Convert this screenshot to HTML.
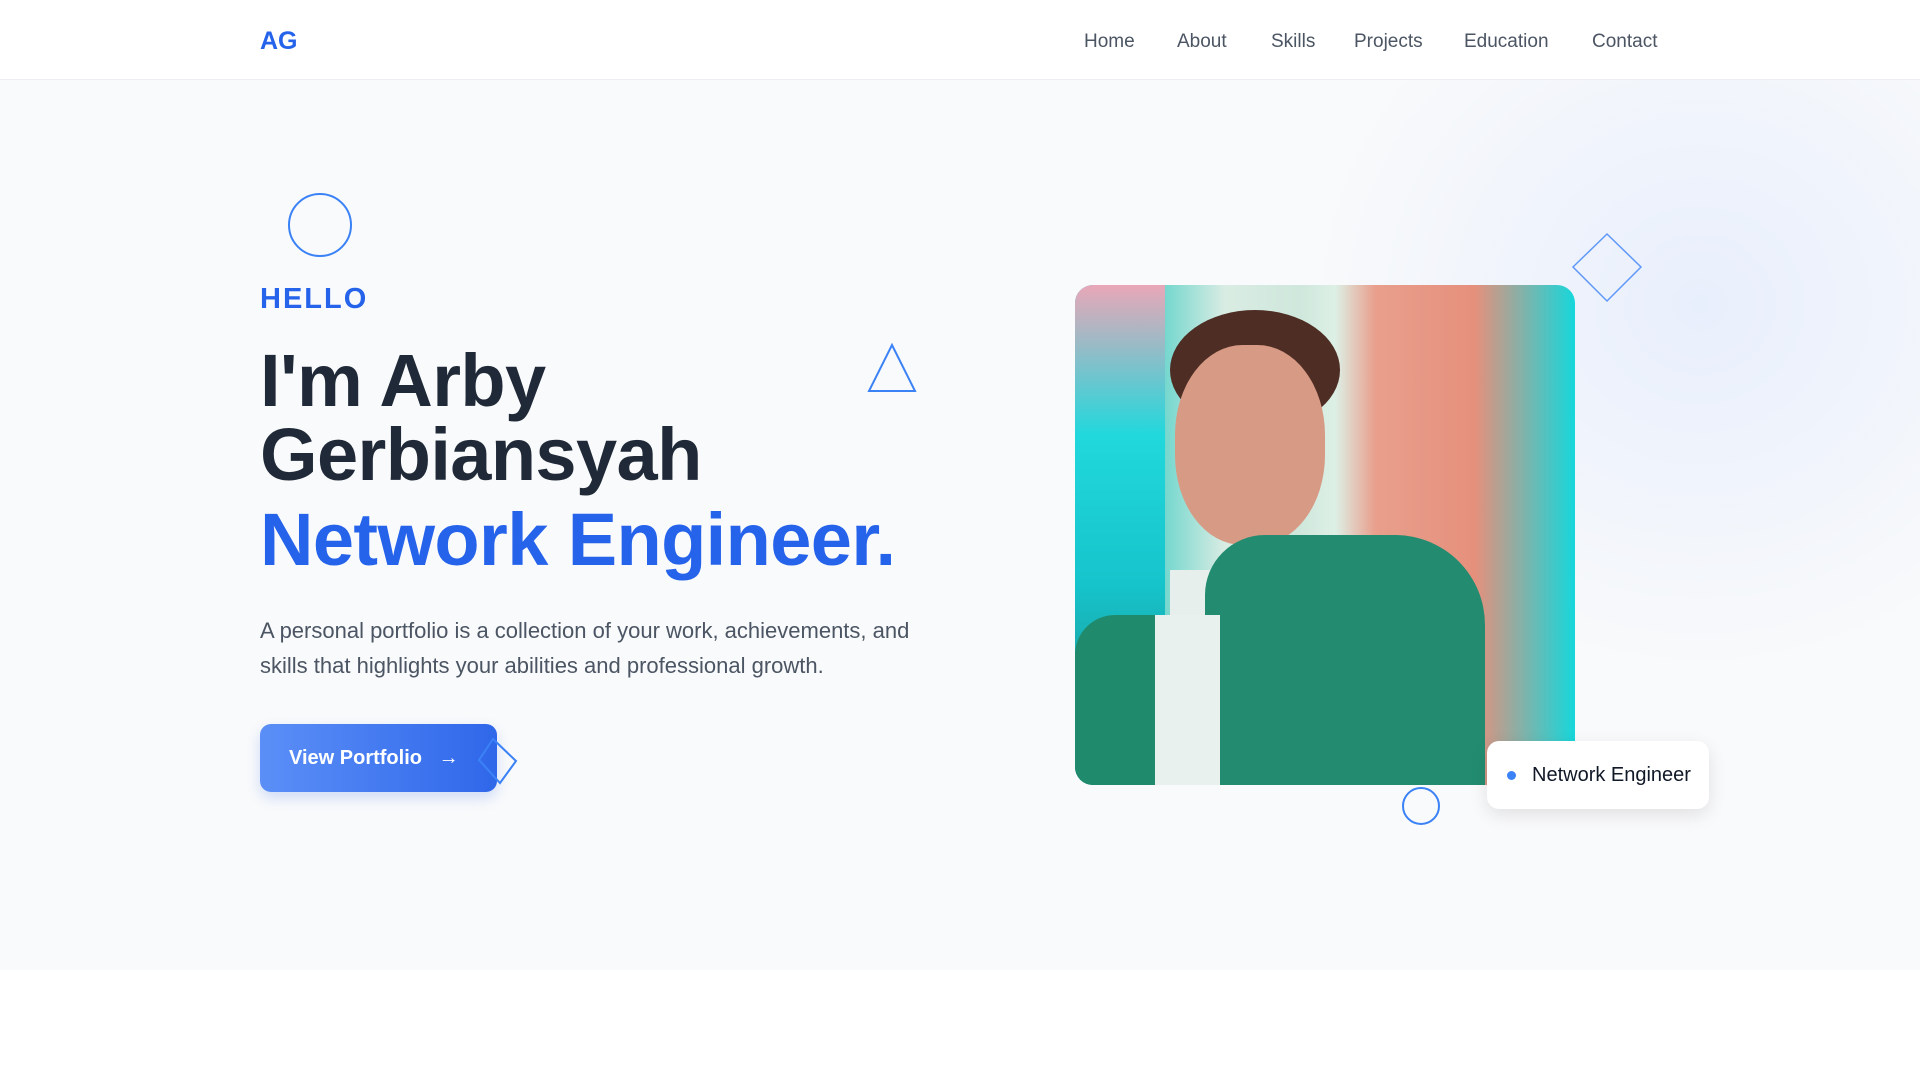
<!DOCTYPE html>
<html><head><meta charset="utf-8"><style>
*{margin:0;padding:0;box-sizing:border-box}
body{width:1920px;height:1080px;background:#fff;font-family:"Liberation Sans",sans-serif;position:relative;overflow:hidden}
nav{position:absolute;left:0;top:0;width:1920px;height:80px;background:#fff;border-bottom:1px solid #eceef1;z-index:5}
.logo{position:absolute;left:260px;top:27px;font-size:25px;font-weight:700;color:#2563eb}
.links a{position:absolute;top:31px;font-size:19px;color:#4b5563;text-decoration:none}
.hero{position:absolute;left:0;top:80px;width:1920px;height:890px;background:#f9fafb;overflow:hidden}
.glow{position:absolute;left:1300px;top:-150px;width:800px;height:750px;border-radius:50%;background:radial-gradient(closest-side,rgba(228,236,252,.8),rgba(249,250,251,0))}
.abs{position:absolute}
.hello{left:260px;top:283px;font-size:29px;font-weight:700;color:#2563eb;letter-spacing:2px}
.h1{left:260px;font-size:74px;font-weight:700;color:#1f2937;letter-spacing:-0.6px;line-height:74px}
.p{left:260px;top:613px;width:680px;font-size:22px;line-height:35px;color:#4b5563}
.btn{left:260px;top:724px;width:237px;height:68px;border-radius:11px;background:linear-gradient(90deg,#5b8ff7,#2f67ea);color:#fff;font-size:20px;font-weight:700;display:flex;align-items:center;padding-left:29px;box-shadow:0 6px 14px rgba(37,99,235,.2)}
.photo{left:1075px;top:285px;width:500px;height:500px;border-radius:18px;overflow:hidden;background:linear-gradient(90deg,#16d5d8 0%,#32c9c0 10%,#d9ece3 30%,#cfe7dc 45%,#ddf0e6 52%,#e99f8d 60%,#e5907c 80%,#16d7db 100%)}
.badge{left:1487px;top:741px;width:222px;height:68px;background:#fff;border-radius:12px;box-shadow:0 6px 18px rgba(0,0,0,.1);font-size:20px;color:#111827;display:flex;align-items:center;padding-left:45px}
.badge:before{content:"";position:absolute;left:20px;top:30px;width:9px;height:9px;border-radius:50%;background:#3b82f6}
</style></head><body>
<nav><div class="logo">AG</div>
<div class="links"><a style="left:1084px">Home</a><a style="left:1177px">About</a><a style="left:1271px">Skills</a><a style="left:1354px">Projects</a><a style="left:1464px">Education</a><a style="left:1592px">Contact</a></div></nav>
<div class="hero"><div class="glow"></div></div>
<svg class="abs" style="left:0;top:0" width="1920" height="1080">
<circle cx="320" cy="225" r="31" fill="none" stroke="#3b82f6" stroke-width="2"/>
<polygon points="892,345 869,391 915,391" fill="none" stroke="#3b82f6" stroke-width="2"/>
<polygon points="1607,234 1641,267 1607,301 1573,267" fill="none" stroke="#3b82f6" stroke-width="1.5" opacity=".8"/>
<circle cx="1421" cy="806" r="18" fill="none" stroke="#3b82f6" stroke-width="2"/>
</svg>
<div class="abs hello">HELLO</div>
<div class="abs h1" style="top:344px">I'm Arby</div>
<div class="abs h1" style="top:418px">Gerbiansyah</div>
<div class="abs h1" style="top:503px;color:#2563eb">Network Engineer.</div>
<div class="abs p">A personal portfolio is a collection of your work, achievements, and skills that highlights your abilities and professional growth.</div>
<div class="abs btn">View Portfolio&nbsp;&nbsp;&nbsp;→</div>
<svg class="abs" style="left:470px;top:733px" width="60" height="60"><polygon points="23,6 46,28 30,50 9,27" fill="none" stroke="#3b82f6" stroke-width="2"/></svg>
<div class="abs photo">
<div class="abs" style="left:0;top:0;width:90px;height:500px;background:linear-gradient(180deg,#e9a7b8,#21d8dc 30%,#16c4cc 60%,#1e7d73)"></div>
<div class="abs" style="left:95px;top:25px;width:170px;height:120px;border-radius:50%;background:#4e2d24"></div>
<div class="abs" style="left:100px;top:60px;width:150px;height:200px;border-radius:45%;background:#d79a85"></div>
<div class="abs" style="left:95px;top:285px;width:40px;height:215px;background:#e6efec"></div>
<div class="abs" style="left:0;top:330px;width:110px;height:170px;background:#1f8a6c;border-radius:40px 0 0 0"></div>
<div class="abs" style="left:130px;top:250px;width:280px;height:250px;background:#238c70;border-radius:60px 90px 0 0"></div>
<div class="abs" style="left:80px;top:330px;width:65px;height:170px;background:#e8f1ee"></div>
</div>
<div class="abs badge">Network Engineer</div>
</body></html>
